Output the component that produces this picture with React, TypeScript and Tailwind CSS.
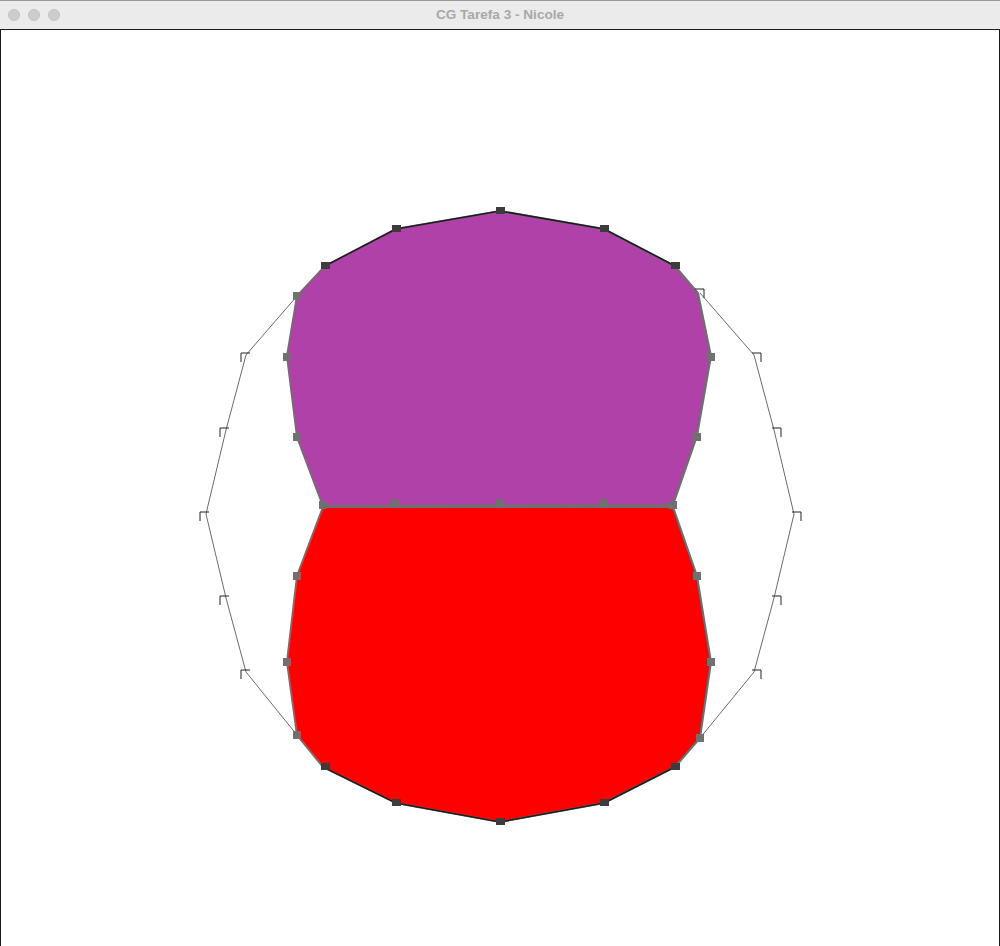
import React from 'react';

// control points of the two filled shapes
const purple = '500,211 604,229 675,266 698,293 711,356 697,436 673,505 323,506 297,437 287,356 297,296 325,266 396,229';
const red = '323,507 673,507 697,576 711,662 700,738 675,767 604,803 500,822 396,803 323,767 297,735 287,662 297,576';

const outlineLeft = '297,296 246,355 226,430 206,514 226,598 246,672 297,735';
const outlineRight = '700,293 754,355 774,430 794,514 774,598 754,672 700,738';

const dark = [
  [500, 211], [396, 229], [604, 229], [325, 266], [675, 266],
  [396, 803], [604, 803], [325, 767], [675, 767], [500, 822],
];
const gray = [
  [297, 296], [287, 357], [711, 357], [297, 437], [697, 437],
  [323, 505], [395, 503], [500, 503], [604, 503], [673, 505],
  [297, 576], [697, 576], [287, 662], [711, 662], [297, 735], [700, 738],
];
const hollowLeft = [[245, 357], [224, 432], [204, 516], [224, 600], [245, 674]];
const hollowRight = [[757, 357], [777, 432], [797, 516], [777, 600], [757, 674], [700, 293]];

function Canvas() {
  return (
    <svg width="998" height="916" viewBox="1 30 998 916" className="block">
      <polyline points={outlineLeft} fill="none" stroke="#444" strokeWidth="0.8" />
      <polyline points={outlineRight} fill="none" stroke="#444" strokeWidth="0.8" />
      <polygon points={purple} fill="#b041a8" stroke="#6f6f6f" strokeWidth="2" strokeLinejoin="miter" />
      <polygon points={red} fill="#ff0000" stroke="#6f6f6f" strokeWidth="2" />
      <polyline points="325,266 396,229 500,211 604,229 675,266" fill="none" stroke="#1c1c1c" strokeWidth="1.5" />
      <polyline points="323,767 396,803 500,822 604,803 675,767" fill="none" stroke="#1c1c1c" strokeWidth="1.5" />
      {gray.map(([x, y], i) => (
        <rect key={'g' + i} x={x - 4} y={y - 4} width="8" height="8" fill="#707070" />
      ))}
      {dark.map(([x, y], i) => (
        <rect key={'d' + i} x={x - 4} y={y - 4} width="9" height="7" fill="#3c3c3c" />
      ))}
      {hollowLeft.map(([x, y], i) => (
        <polyline key={'hl' + i} points={`${x + 5},${y - 4} ${x - 4},${y - 4} ${x - 4},${y + 5}`} fill="none" stroke="#222" strokeWidth="1" />
      ))}
      {hollowRight.map(([x, y], i) => (
        <polyline key={'hr' + i} points={`${x - 5},${y - 4} ${x + 4},${y - 4} ${x + 4},${y + 5}`} fill="none" stroke="#222" strokeWidth="1" />
      ))}
    </svg>
  );
}

export default function App() {
  return (
    <div className="flex h-[946px] w-[1000px] flex-col overflow-hidden bg-white">
      <header className="relative flex h-[30px] shrink-0 items-center justify-center border-t border-b border-t-[#9a9a9a] border-b-[#1a1a1a] bg-[#ebebeb]">
        <div className="absolute left-[8px] top-[8px] flex gap-[8px]">
          <span className="h-[12px] w-[12px] rounded-full border border-[#c2c2c2] bg-[#cdcdcd]" />
          <span className="h-[12px] w-[12px] rounded-full border border-[#c2c2c2] bg-[#cdcdcd]" />
          <span className="h-[12px] w-[12px] rounded-full border border-[#c2c2c2] bg-[#cdcdcd]" />
        </div>
        <span className="font-['Liberation_Sans',Arial,sans-serif] text-[13.6px] font-bold text-[#a8a8a8]">CG Tarefa 3 - Nicole</span>
      </header>
      <main className="flex-1 border-x border-[#1a1a1a] bg-white">
        <Canvas />
      </main>
    </div>
  );
}
